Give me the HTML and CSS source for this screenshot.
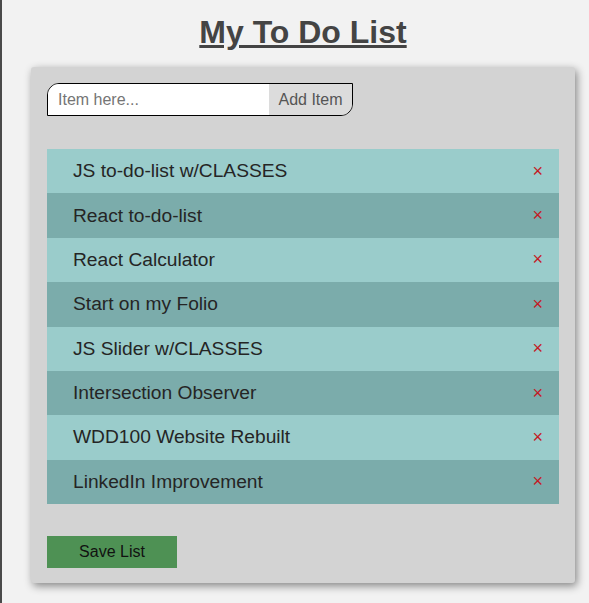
FILE: index.html
```html
<!DOCTYPE html>
<html lang="en">
<head>
<meta charset="utf-8">
<title>My To Do List</title>
<link rel="stylesheet" href="styles.css">
</head>
<body>
<div class="page">
  <h1 class="title">My To Do List</h1>
  <div class="card">
    <form class="add-form">
      <input class="add-input" type="text" placeholder="Item here...">
      <button class="add-btn" type="button">Add Item</button>
    </form>
    <ul class="todo-list">
      <li class="todo-item"><span>JS to-do-list w/CLASSES</span><span class="remove">×</span></li>
      <li class="todo-item"><span>React to-do-list</span><span class="remove">×</span></li>
      <li class="todo-item"><span>React Calculator</span><span class="remove">×</span></li>
      <li class="todo-item"><span>Start on my Folio</span><span class="remove">×</span></li>
      <li class="todo-item"><span>JS Slider w/CLASSES</span><span class="remove">×</span></li>
      <li class="todo-item"><span>Intersection Observer</span><span class="remove">×</span></li>
      <li class="todo-item"><span>WDD100 Website Rebuilt</span><span class="remove">×</span></li>
      <li class="todo-item"><span>LinkedIn Improvement</span><span class="remove">×</span></li>
    </ul>
    <button class="save-btn" type="button">Save List</button>
  </div>
</div>
</body>
</html>
```
FILE: styles.css
```css
html, body {
  margin: 0;
  padding: 0;
}
body {
  background: #f2f2f2;
  font-family: "Liberation Sans", Arial, sans-serif;
  border-left: 2px solid #4a4a4a;
  min-height: 603px;
  box-sizing: border-box;
}
.page {
  margin-left: 29px;
  width: 544px;
  padding-top: 14px;
}
.title {
  margin: 0 0 16px;
  font-size: 32px;
  font-weight: bold;
  text-align: center;
  color: #444;
  text-decoration: underline;
  line-height: normal;
}
.card {
  background: #d3d3d3;
  border-radius: 3px;
  padding: 16px 16px 15px;
  box-shadow: 2px 3px 8px rgba(0, 0, 0, 0.45);
}
.add-form {
  display: flex;
  width: 304px;
  height: 31px;
  border: 1px solid #000;
  border-radius: 12px 0 12px 0;
  overflow: hidden;
  margin: 0;
}
.add-input {
  flex: 1;
  min-width: 0;
  border: none;
  outline: none;
  background: #fff;
  font-family: inherit;
  font-size: 16px;
  padding: 0 10px;
  margin: 0;
  color: #333;
}
.add-input::placeholder {
  color: #757575;
}
.add-btn {
  width: 83px;
  border: none;
  margin: 0;
  padding: 0;
  background: #dcdcdc;
  color: #555;
  font-family: inherit;
  font-size: 16px;
}
.todo-list {
  list-style: none;
  margin: 33px 0 0;
  padding: 0;
}
.todo-item {
  display: flex;
  justify-content: space-between;
  align-items: center;
  padding: 11.2px 16px 11.2px 26px;
  font-size: 19.2px;
  line-height: normal;
  color: #252525;
  background: #9acccb;
}
.todo-item:nth-child(even) {
  background: #7bacab;
}
.remove {
  color: #c41a26;
  font-size: 18px;
}
.save-btn {
  display: block;
  margin-top: 32px;
  width: 130px;
  height: 32px;
  border: none;
  padding: 0;
  background: #4e9154;
  color: #111;
  font-family: inherit;
  font-size: 16px;
}
```
